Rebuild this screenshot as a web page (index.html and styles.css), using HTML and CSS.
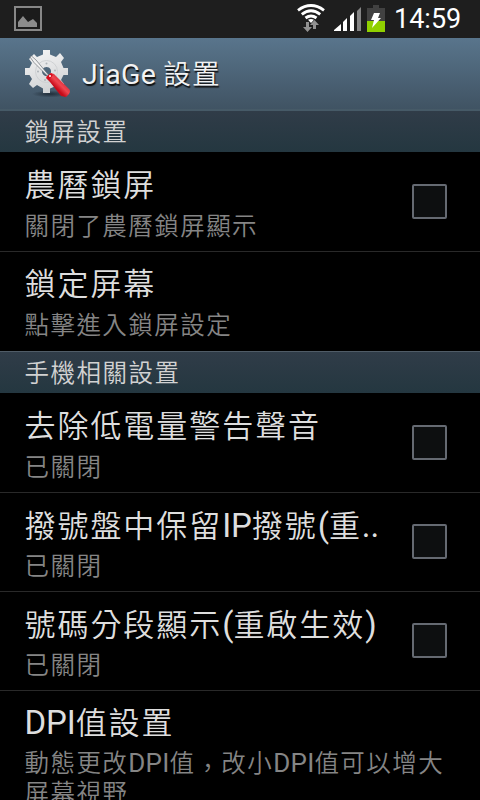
FILE: index.html
```
<!DOCTYPE html>
<html lang="zh-Hant">
<head>
<meta charset="utf-8">
<title>JiaGe 設置</title>
<link rel="stylesheet" href="styles.css">
</head>
<body>
<div class="screen">
  <div class="status">
    <svg class="pic" width="28" height="26" viewBox="0 0 28 26"><rect x="1" y="1" width="26" height="23" fill="#1b1b1b" stroke="#888" stroke-width="2"/><path d="M4 21v-5l5-6 5 6 5-3 4 4v4z" fill="#8b8b8b"/></svg>
    <svg class="signals" width="92" height="32" viewBox="0 0 92 32">
      <g fill="none" stroke="#fff" stroke-width="2.900"><path d="M1 9.300Q14-.2 27 9.300"/><path d="M4.800 13.300Q14 6 23.200 13.300"/><path d="M8.500 17Q14 12.800 19.500 17"/></g>
      <path d="M11 18.800Q14 17 17 18.800L14 22z" fill="#fff"/>
      <g fill="#929292"><path d="M9 21h3v5h3l-4.500 5L6 26h3z"/><path d="M16 28h3v-4h3l-4.500-5L13 24h3z"/></g>
      <path d="M37 30v-1l7-6v7zM46 30v-9l4-4v13zM53 30V15l4-4v19z" fill="#fff"/><path d="M60 30V10l4-4v24z" fill="#858585"/>
      <path d="M70 7h6V4h6v3h6v14H70z" fill="#414141"/><path d="M70 20h18v11H70z" fill="#90d000"/><path d="M77 12h6l-2 5h3l-9 10 2-8h-3z" fill="#fff"/>
    </svg>
    <span class="clock">14:59</span>
  </div>
  <div class="bar">
    <svg class="logo" width="50" height="52" viewBox="0 0 50 52">
      <defs>
        <linearGradient id="g" x2=".3" y2="1"><stop stop-color="#f6f6f6"/><stop offset="1" stop-color="#d2d4d6"/></linearGradient>
        <linearGradient id="r" x1="0" y1="1" x2="1" y2="0"><stop stop-color="#a40010"/><stop offset=".4" stop-color="#c80c1a"/><stop offset=".55" stop-color="#f04650"/><stop offset="1" stop-color="#a00010"/></linearGradient>
        <radialGradient id="s"><stop stop-color="#17212b" stop-opacity=".8"/><stop offset="1" stop-color="#17212b" stop-opacity="0"/></radialGradient>
      </defs>
      <ellipse cx="27" cy="47" rx="18" ry="3.500" fill="url(#s)"/>
      <path fill="url(#g)" fill-rule="evenodd" d="M20 3h7v4.500l6 2.500 4-4 4 5-3 4 2.500 6H45v7h-4.500L38 33l3 4-5 5-3-3-6 2.500V46h-7v-4.500L14 38l-4 3-4-4 3-5-2.500-4H2v-7h4.500L9 16l-3-4 5-5 3 3 6-2.500zM23.500 20a4.500 4.500 0 1 0 .1 0z"/>
      <circle cx="23.500" cy="24.500" r="11" fill="none" stroke="#c9ccce" stroke-width=".8"/>
      <g fill="#aeb4b8"><circle cx="23.500" cy="16.500" r="1"/><circle cx="15" cy="24.500" r="1"/><circle cx="32" cy="23.500" r="1"/><circle cx="22" cy="33" r="1"/></g>
      <path d="M7 10l1.500-1 4.500 4L25.500 28l-1 1L11 15.500z" fill="#f1f1f1" stroke="#6d7379" stroke-width=".7"/>
      <path d="M23 31l5-5 3 1 15 15q2 2 0 5l-3 3-5-1-11-14z" fill="url(#r)"/>
      <path d="M23 30l5-4 2 2-4 5z" fill="#d90c1c"/><circle cx="27" cy="29" r="1" fill="#fff"/>
    </svg>
    <h1><span class="jg">JiaGe</span>設置</h1>
  </div>
  <h2 class="first">鎖屏設置</h2>
  <div class="row"><div class="txt"><div class="t">農曆鎖屏</div><div class="d">關閉了農曆鎖屏顯示</div></div><i class="box"></i></div>
  <div class="row last"><div class="txt"><div class="t">鎖定屏幕</div><div class="d">點擊進入鎖屏設定</div></div></div>
  <h2>手機相關設置</h2>
  <div class="row"><div class="txt"><div class="t">去除低電量警告聲音</div><div class="d">已關閉</div></div><i class="box"></i></div>
  <div class="row short"><div class="txt"><div class="t">撥號盤中保留<span class="lat">IP</span>撥號<span class="lat">(</span>重<span class="lat">..</span></div><div class="d">已關閉</div></div><i class="box"></i></div>
  <div class="row short"><div class="txt"><div class="t">號碼分段顯示<span class="lat">(</span>重啟生效<span class="lat">)</span></div><div class="d">已關閉</div></div><i class="box"></i></div>
  <div class="row long"><div class="txt"><div class="t"><span class="lat">DPI</span>值設置</div><div class="d">動態更改<span class="lat">DPI</span>值<span class="comma">，</span>改小<span class="lat">DPI</span>值可以增大<br>屏幕視野</div></div></div>
</div>
</body>
</html>
```
FILE: styles.css
```
* { box-sizing: border-box; }
body { margin: 0; background: #000; }
.screen {
  width: 480px; height: 800px; overflow: hidden; background: #000;
  font-family: Roboto, "Noto Sans CJK TC", sans-serif; font-weight: 350; color: #dedede;
}
.status { height: 38px; background: #1e1e1e; display: flex; padding-left: 14px; align-items: flex-start; }
.pic { margin-top: 6px; }
.signals { margin-left: 255px; margin-top: 1px; }
.clock { font-size: 27px; line-height: 38px; margin-left: 5px; color: #fff; font-weight: 400; white-space: nowrap; }
.bar {
  height: 73px; display: flex; align-items: center; padding-left: 23px;
  background: linear-gradient(#59758c, #405363); border-bottom: 2px solid #465a67;
}
.logo { flex: none; margin-top: -1px; }
h1 {
  margin: 2px 0 0 9px; font-size: 27.5px; line-height: 40px; font-weight: 350; letter-spacing: 1.2px;
  color: #f2f2f2; text-shadow: 1px 2px 1px #111; white-space: nowrap;
}
.jg { margin-right: 7px; letter-spacing: .3px; font-size: 28.5px; font-weight: 400; }
h2 {
  margin: 0; height: 42px; padding-left: 24.5px; font-size: 24.5px; line-height: 43px; font-weight: 350;
  letter-spacing: 1.5px; color: #d2d2d2; border-top: 1px solid #505c67;
  background: linear-gradient(#303c48, #243740);
}
.first { height: 41px; border-top: 0; }
.row {
  height: 100px; padding: 13px 33px 0 24.5px; border-bottom: 1px solid #292929;
  display: flex; justify-content: space-between;
}
.short { height: 99px; padding-top: 12px; }
.last { height: 99px; padding-top: 12px; border-bottom: 0; }
.long { height: 130px; padding-right: 0; padding-top: 11px; border: 0; }
.txt { white-space: nowrap; }
.t { font-size: 31px; line-height: 42px; height: 42px; letter-spacing: 1.95px; }
.d { font-size: 24.5px; line-height: 30px; margin-top: 5px; letter-spacing: 1.45px; color: #858585; }
.t .lat { font-size: 33px; letter-spacing: -.1px; font-weight: 400; }
.d .lat { font-size: 26px; letter-spacing: .2px; font-weight: 400; line-height: 1; }
.comma { vertical-align: -5px; line-height: 0; }
.box { flex: none; width: 35px; height: 35px; margin-top: 19px; border: 2px solid #656a72; border-radius: 2px; background: #0d0f10; }
```
